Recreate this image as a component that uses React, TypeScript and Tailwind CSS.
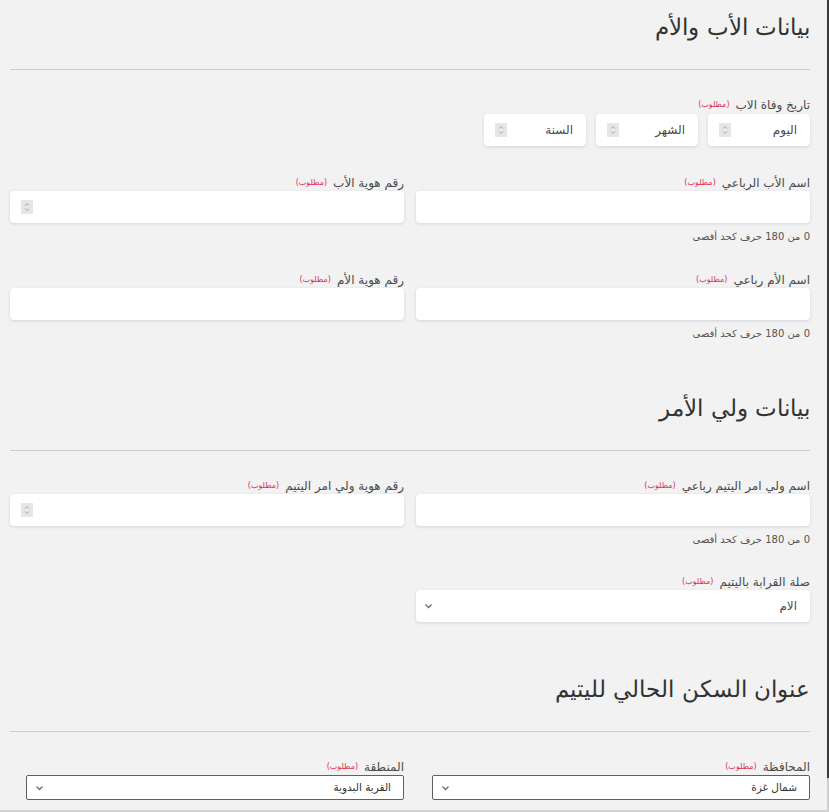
import React from "react";

const FONT = { fontFamily: '"DejaVu Sans", "Noto Sans", sans-serif' };

function Label({ text }: { text: string }) {
  return (
    <div className="flex h-4 items-center gap-1.5 whitespace-nowrap leading-4">
      <span className="text-[12px] text-[#4a4a4a]">{text}</span>
      <span className="text-[8px] text-[#e0305a]">(مطلوب)</span>
    </div>
  );
}

function Spinner() {
  return (
    <span className="flex h-[14px] w-[12px] items-center justify-center bg-[#e6e6e9]">
      <svg width="6" height="10" viewBox="0 0 6 10" fill="none" stroke="#9a9aa2" strokeWidth="0.9">
        <path d="M1 3.5 L3 1.5 L5 3.5" />
        <path d="M1 6.5 L3 8.5 L5 6.5" />
      </svg>
    </span>
  );
}

function Chevron() {
  return (
    <svg width="9" height="6" viewBox="0 0 9 6" fill="none" stroke="#6b6b73" strokeWidth="1.3">
      <path d="M1.5 1.5 L4.5 4.5 L7.5 1.5" />
    </svg>
  );
}

function Box({ children, spinner }: { children?: React.ReactNode; spinner?: boolean }) {
  return (
    <div className="flex h-8 items-center justify-between rounded-[4px] bg-white pl-[11px] pr-[13px] shadow-[0_1px_3px_rgba(70,80,120,0.18)]">
      <span className="text-[12px] text-[#4a4a4a]">{children}</span>
      {spinner ? <Spinner /> : null}
    </div>
  );
}

function Hint() {
  return <div className="mt-[6px] h-4 text-[10px] leading-4 text-[#555]">0 من 180 حرف كحد أقصى</div>;
}

function Heading({ text, mt }: { text: string; mt: string }) {
  return (
    <>
      <h2 className={`${mt} h-9 text-[23px] font-light leading-9 text-[#333]`}>{text}</h2>
      <div className="mt-6 border-t border-[#cccccc]" />
    </>
  );
}

function BorderSelect({ label, value }: { label: string; value: string }) {
  return (
    <div>
      <Label text={label} />
      <div className="flex h-[25px] w-[calc(100%-16px)] items-center justify-between rounded-[2px] border border-[#5f6066] bg-white pl-[8px] pr-[12px]">
        <span className="text-[10.5px] text-[#333]">{value}</span>
        <Chevron />
      </div>
    </div>
  );
}

export default function App() {
  return (
    <div className="flex h-[812px] w-[829px] overflow-hidden border-b-2 border-[#d2d2d2] bg-[#f2f2f2]" style={FONT}>
      <div dir="rtl" className="ml-[10px] w-[800px] shrink-0">
        {/* بيانات الأب والأم */}
        <Heading text="بيانات الأب والأم" mt="mt-[9px]" />

        <div className="mt-[27px]">
          <Label text="تاريخ وفاة الاب" />
          <div className="mt-px flex gap-[10px]">
            <div className="w-[102px]"><Box spinner>اليوم</Box></div>
            <div className="w-[102px]"><Box spinner>الشهر</Box></div>
            <div className="w-[102px]"><Box spinner>السنة</Box></div>
          </div>
        </div>

        <div className="mt-[29px] grid grid-cols-2 items-start gap-x-3">
          <div>
            <Label text="اسم الأب الرباعي" />
            <Box />
            <Hint />
          </div>
          <div>
            <Label text="رقم هوية الأب" />
            <Box spinner />
          </div>
        </div>

        <div className="mt-[27px] grid grid-cols-2 items-start gap-x-3">
          <div>
            <Label text="اسم الأم رباعي" />
            <Box />
            <Hint />
          </div>
          <div>
            <Label text="رقم هوية الأم" />
            <Box />
          </div>
        </div>

        {/* بيانات ولي الأمر */}
        <Heading text="بيانات ولي الأمر" mt="mt-[48px]" />

        <div className="mt-[27px] grid grid-cols-2 items-start gap-x-3">
          <div>
            <Label text="اسم ولي امر اليتيم رباعي" />
            <Box />
            <Hint />
          </div>
          <div>
            <Label text="رقم هوية ولي امر اليتيم" />
            <Box spinner />
          </div>
        </div>

        <div className="mt-[26px] grid grid-cols-2 items-start gap-x-3">
          <div>
            <Label text="صلة القرابة باليتيم" />
            <div className="flex h-8 items-center justify-between rounded-[4px] bg-white pl-[8px] pr-[13px] shadow-[0_1px_3px_rgba(70,80,120,0.18)]">
              <span className="text-[12px] text-[#4a4a4a]">الام</span>
              <Chevron />
            </div>
          </div>
          <div />
        </div>

        {/* عنوان السكن */}
        <Heading text="عنوان السكن الحالي لليتيم" mt="mt-[49px]" />

        <div className="mt-[27px] grid grid-cols-2 items-start gap-x-3">
          <BorderSelect label="المحافظة" value="شمال غزة" />
          <BorderSelect label="المنطقة" value="القرية البدوية" />
        </div>
      </div>
      <div className="flex-1" />
      <div className="flex w-[2px] flex-col">
        <div className="h-[778px] bg-[#3a3a3a]" />
        <div className="flex-1 bg-[#cfcfcf]" />
      </div>
    </div>
  );
}
